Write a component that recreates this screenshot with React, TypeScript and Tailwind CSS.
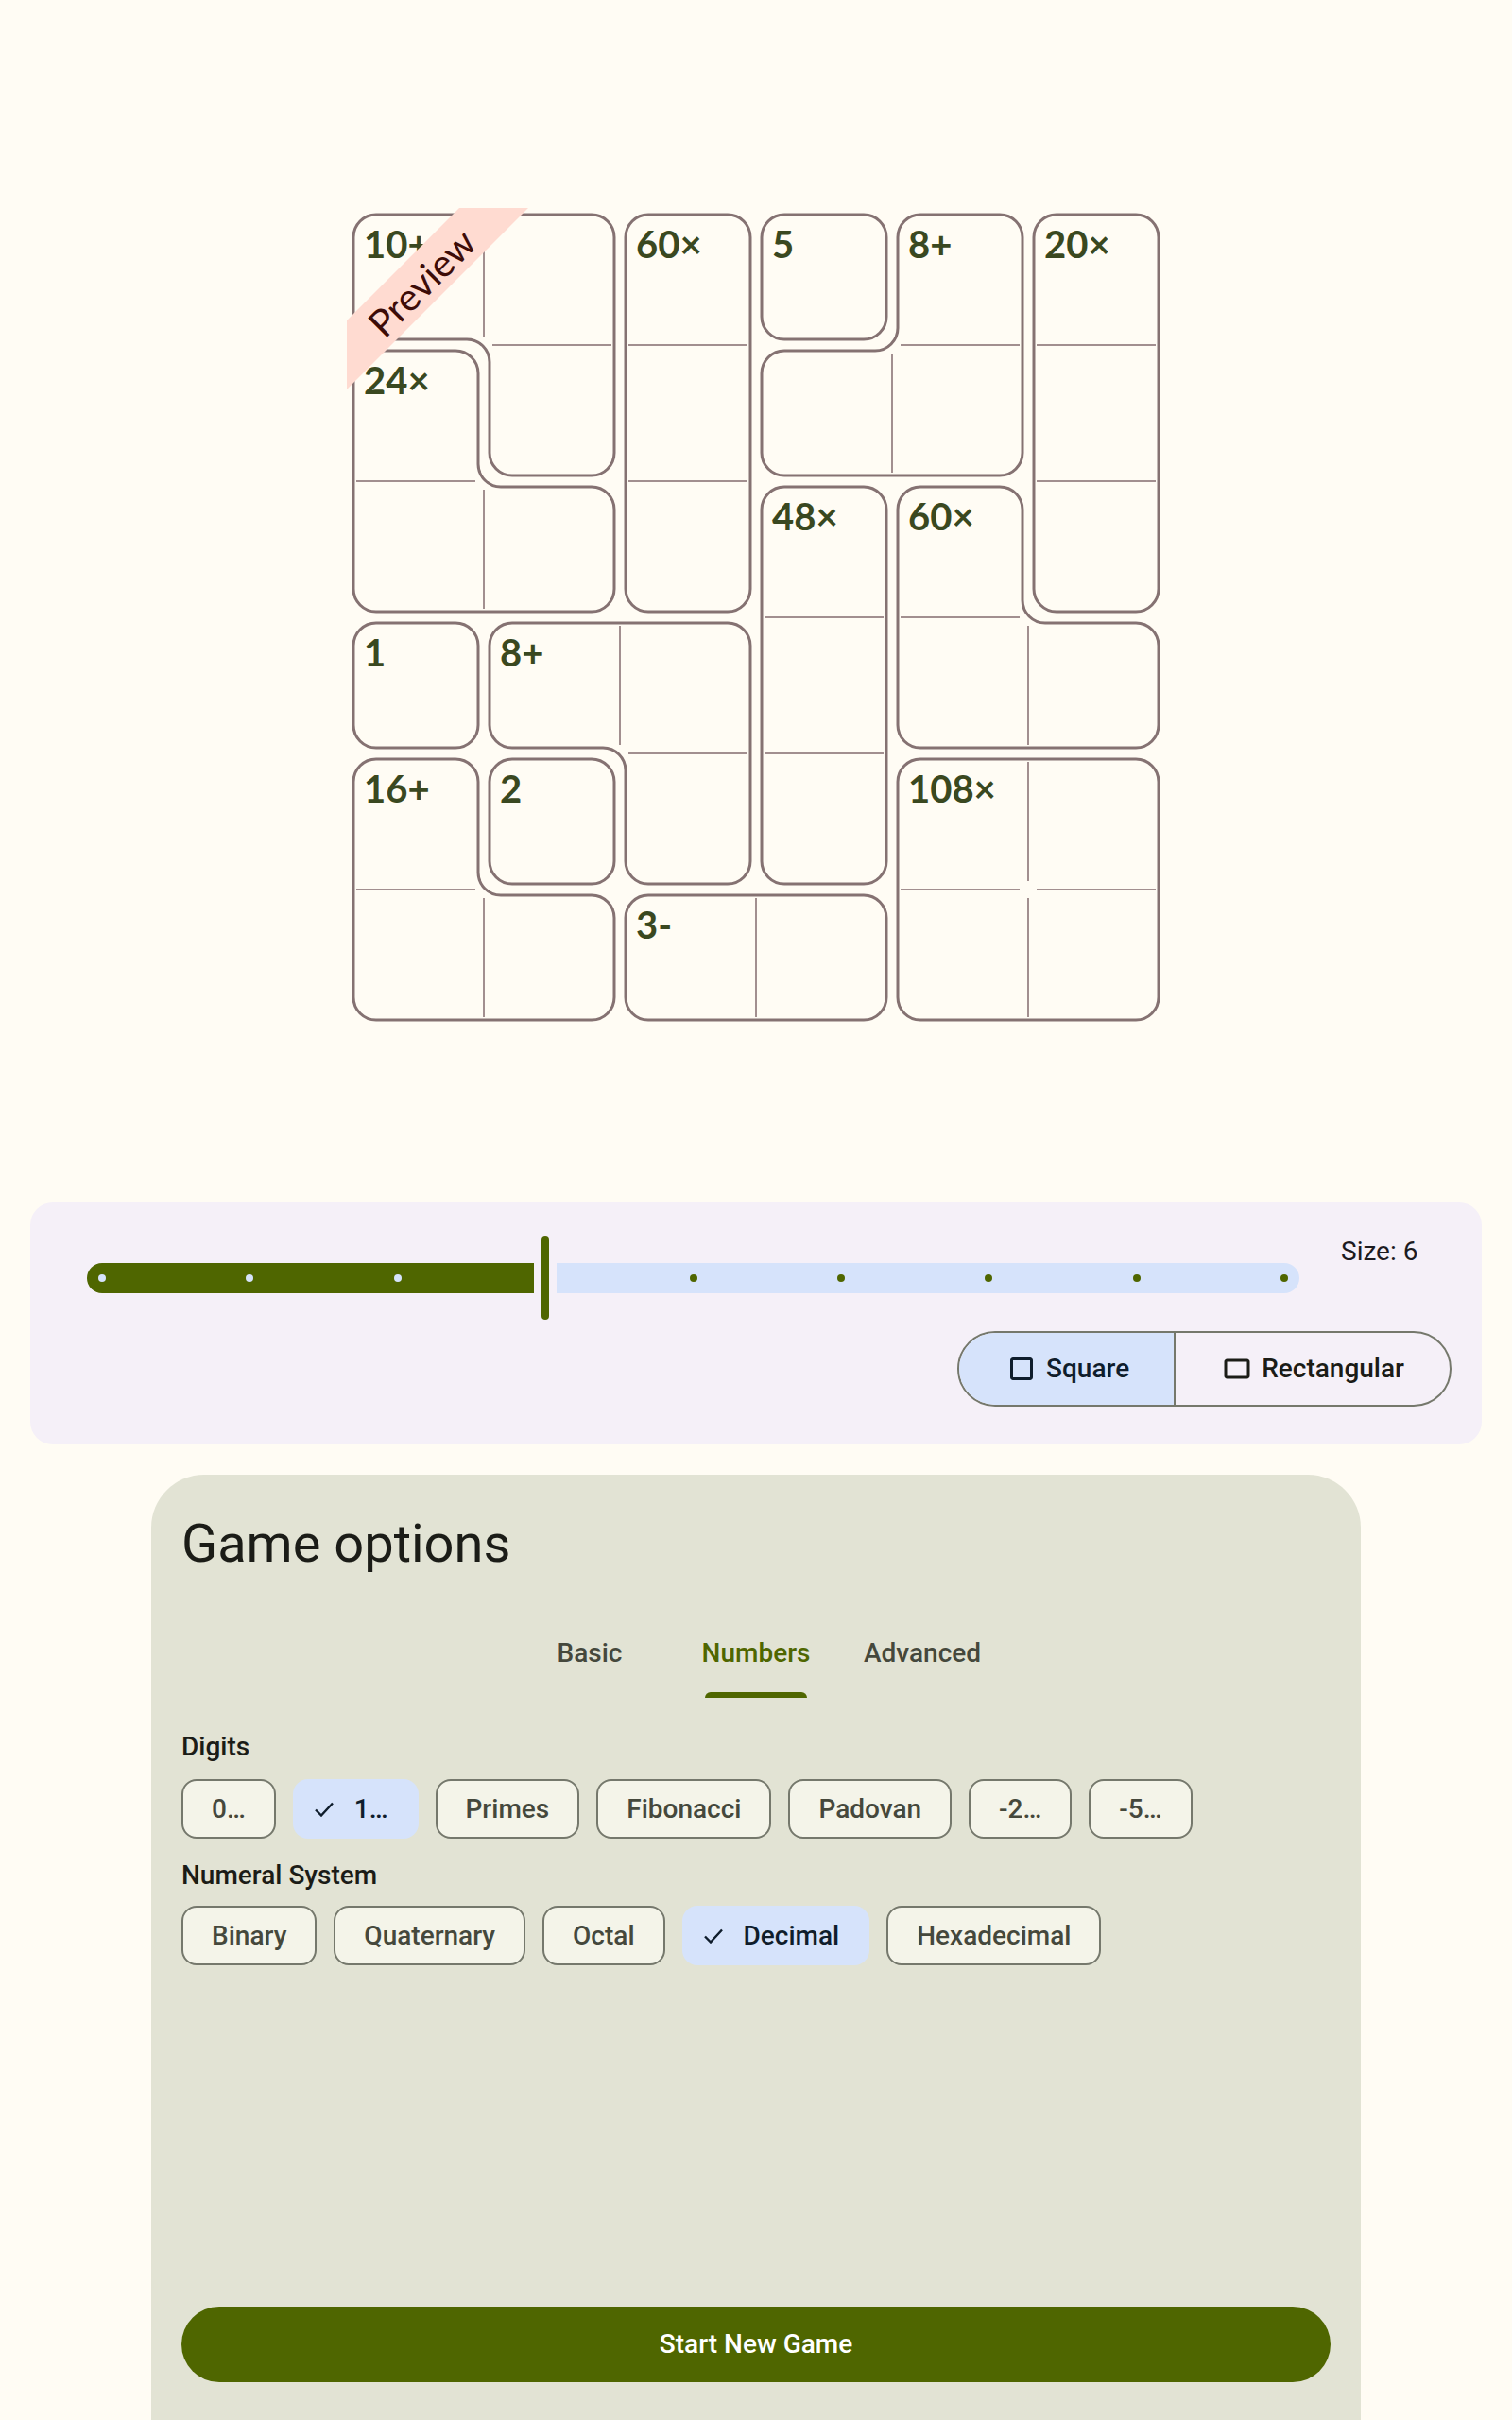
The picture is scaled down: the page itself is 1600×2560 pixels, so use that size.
import React from 'react';

const CELL = 144;
const INSET = 6;
const RADIUS = 24;

type Cage = { label: string; cells: [number, number][] };

const cages: Cage[] = [
    { label: '10+', cells: [[0, 0], [0, 1], [1, 1]] },
    { label: '60×', cells: [[0, 2], [1, 2], [2, 2]] },
    { label: '5', cells: [[0, 3]] },
    { label: '8+', cells: [[0, 4], [1, 3], [1, 4]] },
    { label: '20×', cells: [[0, 5], [1, 5], [2, 5]] },
    { label: '24×', cells: [[1, 0], [2, 0], [2, 1]] },
    { label: '48×', cells: [[2, 3], [3, 3], [4, 3]] },
    { label: '60×', cells: [[2, 4], [3, 4], [3, 5]] },
    { label: '1', cells: [[3, 0]] },
    { label: '8+', cells: [[3, 1], [3, 2], [4, 2]] },
    { label: '16+', cells: [[4, 0], [5, 0], [5, 1]] },
    { label: '2', cells: [[4, 1]] },
    { label: '108×', cells: [[4, 4], [4, 5], [5, 4], [5, 5]] },
    { label: '3-', cells: [[5, 2], [5, 3]] },
];

type Edge = [number, number, number, number];

function cageOutline(cells: [number, number][]) {
    const set = new Set(cells.map(([r, c]) => `${r},${c}`));
    const has = (r: number, c: number) => set.has(`${r},${c}`);
    const edges = new Map<string, Edge>();
    for (const [r, c] of cells) {
        if (!has(r - 1, c)) edges.set(`${c},${r}`, [c, r, c + 1, r]);
        if (!has(r, c + 1)) edges.set(`${c + 1},${r}`, [c + 1, r, c + 1, r + 1]);
        if (!has(r + 1, c)) edges.set(`${c + 1},${r + 1}`, [c + 1, r + 1, c, r + 1]);
        if (!has(r, c - 1)) edges.set(`${c},${r + 1}`, [c, r + 1, c, r]);
    }
    const first = edges.values().next().value as Edge;
    const pts: [number, number][] = [];
    let e = first;
    do {
        pts.push([e[0], e[1]]);
        e = edges.get(`${e[2]},${e[3]}`) as Edge;
    } while (e !== first);

    const n0 = pts.length;
    const verts = pts.filter((p, i) => {
        const a = pts[(i - 1 + n0) % n0];
        const b = pts[(i + 1) % n0];
        return !((a[0] === p[0] && p[0] === b[0]) || (a[1] === p[1] && p[1] === b[1]));
    });

    const n = verts.length;
    const corners = verts.map((v, i) => {
        const prev = verts[(i - 1 + n) % n];
        const next = verts[(i + 1) % n];
        const din = [Math.sign(v[0] - prev[0]), Math.sign(v[1] - prev[1])];
        const dout = [Math.sign(next[0] - v[0]), Math.sign(next[1] - v[1])];
        const nin = [-din[1], din[0]];
        const nout = [-dout[1], dout[0]];
        const px = v[0] * CELL + INSET * (nin[0] + nout[0]);
        const py = v[1] * CELL + INSET * (nin[1] + nout[1]);
        const convex = din[0] * dout[1] - din[1] * dout[0] > 0;
        return {
            a: [px - din[0] * RADIUS, py - din[1] * RADIUS],
            b: [px + dout[0] * RADIUS, py + dout[1] * RADIUS],
            sweep: convex ? 1 : 0,
        };
    });

    let d = `M ${corners[0].a[0]} ${corners[0].a[1]}`;
    corners.forEach((c, i) => {
        if (i > 0) d += ` L ${c.a[0]} ${c.a[1]}`;
        d += ` A ${RADIUS} ${RADIUS} 0 0 ${c.sweep} ${c.b[0]} ${c.b[1]}`;
    });
    d += ` L ${corners[0].a[0]} ${corners[0].a[1]} Z`;

    // thin lines between cells of the same cage
    const lines: Edge[] = [];
    for (const [r, c] of cells) {
        if (has(r, c + 1)) lines.push([(c + 1) * CELL, r * CELL + 9, (c + 1) * CELL, (r + 1) * CELL - 9]);
        if (has(r + 1, c)) lines.push([c * CELL + 9, (r + 1) * CELL, (c + 1) * CELL - 9, (r + 1) * CELL]);
    }

    const sorted = [...cells].sort((p, q) => p[0] - q[0] || p[1] - q[1]);
    return { d, lines, anchor: sorted[0] };
}

function PuzzleGrid() {
    return (
        <svg width={864} height={864} viewBox="0 0 864 864" className="block overflow-visible">
            <defs>
                <clipPath id="gridClip">
                    <rect x={-1} y={-1} width={866} height={866} />
                </clipPath>
            </defs>
            {cages.map((cage, i) => {
                const { d, lines, anchor } = cageOutline(cage.cells);
                return (
                    <g key={i}>
                        {lines.map((l, j) => (
                            <line key={j} x1={l[0]} y1={l[1]} x2={l[2]} y2={l[3]} stroke="#a28f8f" strokeWidth={2} />
                        ))}
                        <path d={d} fill="none" stroke="#857272" strokeWidth={3} />
                        <text
                            x={anchor[1] * CELL + 17}
                            y={anchor[0] * CELL + 52}
                            className="font-['Lato',sans-serif] font-bold text-[40px] fill-[#3a4820]"
                        >
                            {cage.label}
                        </text>
                    </g>
                );
            })}
            {/* Preview ribbon */}
            <g clipPath="url(#gridClip)">
                <polygon points="118,-1 191,-1 -1,191 -1,118" fill="#ffdbd1" />
                <text
                    x={78}
                    y={78}
                    textAnchor="middle"
                    dominantBaseline="central"
                    transform="rotate(-45 78 78)"
                    className="font-['Lato',sans-serif] text-[40px] fill-[#3d0c08]"
                >
                    Preview
                </text>
            </g>
        </svg>
    );
}

function SizeSlider() {
    const ticks = Array.from({ length: 9 }, (_, i) => i);
    return (
        <div className="relative w-[1283px] h-[96px] flex items-center shrink-0">
            <div className="h-[32px] w-[473px] bg-[#4f6600] rounded-l-full rounded-r-[4px]" />
            <div className="ml-[8px] h-[88px] w-[8px] rounded-full bg-[#4f6600]" />
            <div className="ml-[8px] h-[32px] w-[786px] bg-[#d6e3fb] rounded-r-full rounded-l-[4px]" />
            {ticks.filter(i => i !== 3).map(i => (
                <div
                    key={i}
                    className={`absolute top-[44px] w-[8px] h-[8px] rounded-full ${i < 3 ? 'bg-[#d6e3fb]' : 'bg-[#4f6600]'}`}
                    style={{ left: 16 + i * 156.375 - 4 }}
                />
            ))}
        </div>
    );
}

function CropSquare() {
    return (
        <svg width="36" height="36" viewBox="0 0 24 24" fill="currentColor">
            <path d="M18 4H6c-1.1 0-2 .9-2 2v12c0 1.1.9 2 2 2h12c1.1 0 2-.9 2-2V6c0-1.1-.9-2-2-2zm0 14H6V6h12v12z" />
        </svg>
    );
}

function CropLandscape() {
    return (
        <svg width="36" height="36" viewBox="0 0 24 24" fill="currentColor">
            <path d="M19 5H5c-1.1 0-2 .9-2 2v10c0 1.1.9 2 2 2h14c1.1 0 2-.9 2-2V7c0-1.1-.9-2-2-2zm0 12H5V7h14v10z" />
        </svg>
    );
}

function Check() {
    return (
        <svg width="20" height="16" viewBox="0 0 20 16" fill="none" stroke="currentColor" strokeWidth="2.4">
            <polyline points="1,8.5 7,14.5 19,1.5" />
        </svg>
    );
}

function Chip({ label, selected }: { label: string; selected?: boolean }) {
    if (selected) {
        return (
            <div className="h-[63px] flex items-center gap-[22px] pl-[23px] pr-[32px] rounded-[16px] bg-[#d6e3fb] text-[#0f1d2c]">
                <Check />
                <span>{label}</span>
            </div>
        );
    }
    return (
        <div className="h-[63px] flex items-center px-[30px] rounded-[16px] border-2 border-[#75786c] bg-[#f4f4e9] text-[#45483c]">
            {label}
        </div>
    );
}

export default function App() {
    const digits = ['0…', '1…', 'Primes', 'Fibonacci', 'Padovan', '-2…', '-5…'];
    const systems = ['Binary', 'Quaternary', 'Octal', 'Decimal', 'Hexadecimal'];

    return (
        <div className="w-[1600px] h-[2560px] overflow-hidden bg-[#fffcf4] flex flex-col font-['Roboto',sans-serif]">
            {/* Puzzle preview */}
            <div className="pt-[221px] flex justify-center">
                <PuzzleGrid />
            </div>

            {/* Size panel */}
            <div className="mx-[32px] mt-[187px] h-[256px] rounded-[24px] bg-[#f5f0f8] pt-[32px] pl-[60px] pr-[32px]">
                <div className="flex items-start">
                    <SizeSlider />
                    <span className="ml-[44px] text-[28px] leading-[40px] text-[#1c1b1f]">Size: 6</span>
                </div>
                <div className="flex justify-end mt-[8px]">
                    <div className="flex h-[80px] rounded-full border-2 border-[#75786c] overflow-hidden text-[28px] font-medium">
                        <div className="flex items-center gap-[8px] pl-[48px] pr-[47px] bg-[#d6e3fb] text-[#0f1d2c] border-r-2 border-[#75786c]">
                            <CropSquare />
                            <span>Square</span>
                        </div>
                        <div className="flex items-center gap-[8px] pl-[47px] pr-[48px] text-[#1b1c17]">
                            <CropLandscape />
                            <span>Rectangular</span>
                        </div>
                    </div>
                </div>
            </div>

            {/* Game options */}
            <div className="mx-[160px] mt-[32px] flex-1 rounded-t-[56px] bg-[#e2e3d4] px-[32px] pt-[37px] pb-[40px] flex flex-col">
                <h1 className="text-[56px] leading-[72px] text-[#1b1c17]">Game options</h1>

                <div className="mt-[31px] h-[96px] flex justify-center text-[28px] font-medium">
                    {['Basic', 'Numbers', 'Advanced'].map(tab => (
                        <div key={tab} className="w-[176px] flex flex-col items-center">
                            <div className="flex-1 flex items-center pt-[8px]">
                                <span className={tab === 'Numbers' ? 'text-[#4f6600]' : 'text-[#45483c]'}>{tab}</span>
                            </div>
                            <div className={`h-[6px] w-[108px] rounded-t-[6px] ${tab === 'Numbers' ? 'bg-[#4f6600]' : 'bg-transparent'}`} />
                        </div>
                    ))}
                </div>

                <div className="mt-[32px] text-[28px] leading-[40px] font-medium text-[#1b1c17]">Digits</div>
                <div className="mt-[14px] flex gap-[18px] text-[28px] leading-[40px] font-medium">
                    {digits.map(d => (
                        <Chip key={d} label={d} selected={d === '1…'} />
                    ))}
                </div>

                <div className="mt-[19px] text-[28px] leading-[40px] font-medium text-[#1b1c17]">Numeral System</div>
                <div className="mt-[12px] flex gap-[18px] text-[28px] leading-[40px] font-medium">
                    {systems.map(s => (
                        <Chip key={s} label={s} selected={s === 'Decimal'} />
                    ))}
                </div>

                <button className="mt-auto h-[80px] w-full rounded-full bg-[#4f6600] text-white text-[28px] font-medium">
                    Start New Game
                </button>
            </div>
        </div>
    );
}
